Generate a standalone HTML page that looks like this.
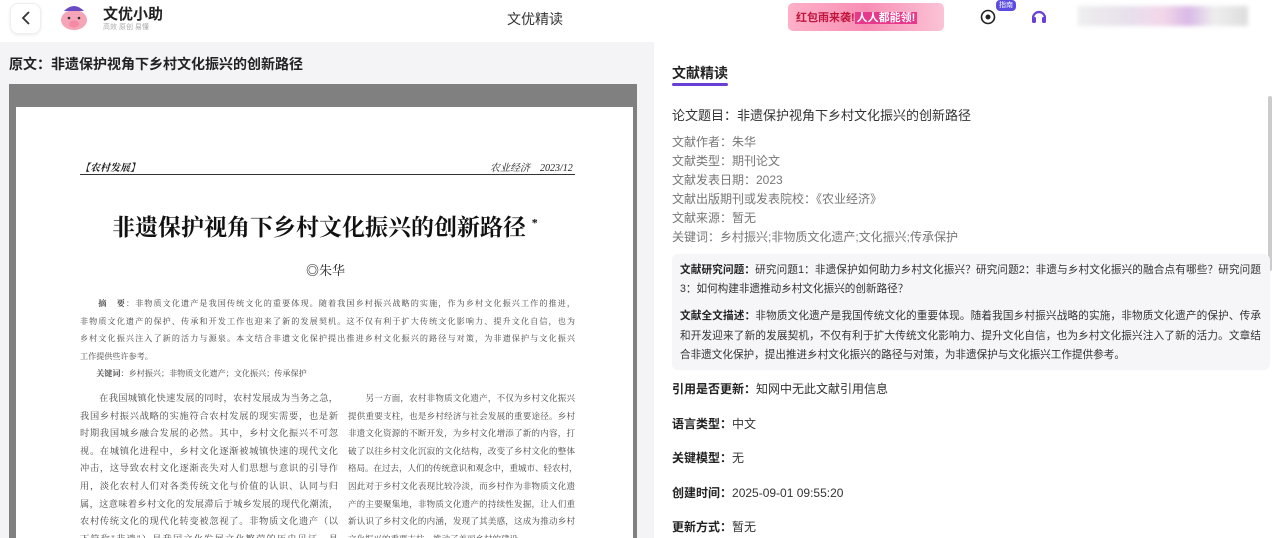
<!DOCTYPE html>
<html style="height:538px;overflow:hidden"><head><meta charset="utf-8"><style>
*{margin:0;padding:0;box-sizing:border-box}
body{width:1280px;height:538px;overflow:hidden;background:#fff;font-family:"Liberation Sans","Noto Sans CJK SC",sans-serif;color:#222;position:relative}
.a{position:absolute;white-space:nowrap}
.serif{font-family:"Liberation Serif","Noto Serif CJK SC",serif}
.col{position:absolute;font-family:"Liberation Serif","Noto Serif CJK SC",serif;font-size:9.2px;line-height:17.6px;color:#444;overflow:hidden}
.col div,.jl div{text-align:justify;text-align-last:justify;white-space:nowrap}
.col div.e,.jl div.e{text-align-last:left}
.m{font-size:12px;color:#777}
.f{font-size:12px;color:#333}
.f b{color:#222}
</style></head><body>
<div class="a" style="left:10px;top:3px;width:31px;height:31px;border:1px solid #eee;border-radius:8px;box-shadow:0 1px 3px rgba(0,0,0,.08)"></div>
<svg class="a" style="left:19px;top:10px" width="14" height="16"><path d="M10 2 L4 8 L10 14" stroke="#333" stroke-width="1.8" fill="none"/></svg>
<svg class="a" style="left:52px;top:3px" width="46" height="28"><ellipse cx="22" cy="17" rx="13" ry="10" fill="#f6a5b8"/><path d="M12 8 Q22 -2 32 8 Z" fill="#6a4bc4"/><ellipse cx="22" cy="21" rx="5" ry="3.5" fill="#f48aa3"/><circle cx="17" cy="15" r="1.3" fill="#333"/><circle cx="27" cy="15" r="1.3" fill="#333"/></svg>
<div class="a" style="left:103px;top:3px;font-size:15px;font-weight:bold;color:#222">文优小助</div>
<div class="a" style="left:103px;top:22px;font-size:7px;color:#aaa">高效 原创 易懂</div>
<div class="a" style="left:507px;top:9px;font-size:14px;color:#333">文优精读</div>
<div class="a" style="left:788px;top:3px;width:156px;height:28px;border-radius:5px;background:linear-gradient(90deg,#ffb0c8,#f78fb4,#fbc3d6)"></div>
<div class="a" style="left:796px;top:9px;font-size:11px;font-weight:bold;color:#c0143c">红包雨来袭!<span style="background:#e8388b;color:#fff;padding:0 2px">人人都能领!</span></div>
<svg class="a" style="left:980px;top:9px" width="16" height="16"><circle cx="8" cy="8" r="6.5" stroke="#222" stroke-width="1.6" fill="none"/><circle cx="8" cy="8" r="2.5" fill="#222"/></svg>
<div class="a" style="left:996px;top:0;width:20px;height:11px;background:#5b4de0;border-radius:4px;color:#fff;font-size:7px;text-align:center;line-height:11px">指南</div>
<svg class="a" style="left:1030px;top:8px" width="18" height="18"><path d="M3 10 A6 6 0 0 1 15 10" stroke="#6a3fd6" stroke-width="2.2" fill="none"/><rect x="2" y="9" width="4" height="6" rx="1.5" fill="#6a3fd6"/><rect x="12" y="9" width="4" height="6" rx="1.5" fill="#6a3fd6"/></svg>
<div class="a" style="left:1078px;top:6px;width:170px;height:20px;background:linear-gradient(90deg,#eee,#e8e0ec 30%,#f3d7ea 50%,#d9b9e6 65%,#eee 80%,#ddd);filter:blur(2px)"></div>

<div class="a" style="left:0;top:42px;width:640px;height:496px;background:#f4f4f6"></div>
<div class="a" style="left:9px;top:54px;font-size:14px;font-weight:bold;color:#222">原文：非遗保护视角下乡村文化振兴的创新路径</div>
<div class="a" style="left:9px;top:84px;width:628px;height:454px;background:#808080"></div>
<div class="a" style="left:16px;top:107px;width:617px;height:431px;background:#fff"></div>
<div class="a serif" style="left:80px;top:159px;font-size:10px;font-weight:bold;font-style:italic;color:#222">【农村发展】</div>
<div class="a serif" style="left:490px;top:159px;font-size:10px;font-style:italic;color:#222">农业经济　2023/12</div>
<div class="a" style="left:80px;top:174px;width:495px;border-top:1px solid #333"></div>
<div class="a serif" style="left:112px;top:209px;font-size:23px;font-weight:bold;color:#111">非遗保护视角下乡村文化振兴的创新路径 <sup style="font-size:12px">*</sup></div>
<div class="a serif" style="left:306px;top:260px;font-size:13px;color:#222">◎朱华</div>
<div class="col" style="left:80px;top:295px;width:495px;font-size:8.1px;line-height:17.5px">
<div>　　<b>摘　要</b>：非物质文化遗产是我国传统文化的重要体现。随着我国乡村振兴战略的实施，作为乡村文化振兴工作的推进，</div>
<div>非物质文化遗产的保护、传承和开发工作也迎来了新的发展契机。这不仅有利于扩大传统文化影响力、提升文化自信，也为</div>
<div>乡村文化振兴注入了新的活力与源泉。本文结合非遗文化保护提出推进乡村文化振兴的路径与对策，为非遗保护与文化振兴</div>
<div class="e">工作提供些许参考。</div>
<div class="e">　　<b>关键词</b>：乡村振兴；非物质文化遗产；文化振兴；传承保护</div></div>
<div class="col" style="left:80px;top:390px;width:258px;height:148px">
<div>　　在我国城镇化快速发展的同时，农村发展成为当务之急，</div>
<div>我国乡村振兴战略的实施符合农村发展的现实需要，也是新</div>
<div>时期我国城乡融合发展的必然。其中，乡村文化振兴不可忽</div>
<div>视。在城镇化进程中，乡村文化逐渐被城镇快速的现代文化</div>
<div>冲击，这导致农村文化逐渐丧失对人们思想与意识的引导作</div>
<div>用，淡化农村人们对各类传统文化与价值的认识、认同与归</div>
<div>属，这意味着乡村文化的发展滞后于城乡发展的现代化潮流，</div>
<div>农村传统文化的现代化转变被忽视了。非物质文化遗产（以</div>
<div>下简称"非遗"）是我国文化发展文化繁荣的历史见证，是</div></div>
<div class="col" style="left:348px;top:390px;width:227px;height:148px;font-size:8.5px">
<div>　　另一方面，农村非物质文化遗产，不仅为乡村文化振兴</div>
<div>提供重要支柱，也是乡村经济与社会发展的重要途径。乡村</div>
<div>非遗文化资源的不断开发，为乡村文化增添了新的内容，打</div>
<div>破了以往乡村文化沉寂的文化结构，改变了乡村文化的整体</div>
<div>格局。在过去，人们的传统意识和观念中，重城市、轻农村，</div>
<div>因此对于乡村文化表现比较冷淡，而乡村作为非物质文化遗</div>
<div>产的主要聚集地，非物质文化遗产的持续性发掘，让人们重</div>
<div>新认识了乡村文化的内涵，发现了其美感，这成为推动乡村</div>
<div class="e">文化振兴的重要支柱，推动了美丽乡村的建设。</div></div>

<div class="a" style="left:640px;top:42px;width:14px;height:496px;background:#f4f4f6"></div>
<div class="a" style="left:672px;top:63px;font-size:14px;font-weight:bold;color:#222">文献精读</div>
<div class="a" style="left:672px;top:83px;width:56px;height:3px;border-radius:2px;background:#6a3fd6"></div>
<div class="a" style="left:1268px;top:96px;width:4px;height:175px;border-radius:2px;background:#ccc"></div>
<div class="a" style="left:672px;top:105px;font-size:13px;color:#333">论文题目：非遗保护视角下乡村文化振兴的创新路径</div>
<div class="a m" style="left:672px;top:133px">文献作者：朱华</div>
<div class="a m" style="left:672px;top:152px">文献类型：期刊论文</div>
<div class="a m" style="left:672px;top:171px">文献发表日期：2023</div>
<div class="a m" style="left:672px;top:190px">文献出版期刊或发表院校：《农业经济》</div>
<div class="a m" style="left:672px;top:209px">文献来源：暂无</div>
<div class="a m" style="left:672px;top:228px">关键词：乡村振兴;非物质文化遗产;文化振兴;传承保护</div>
<div class="a" style="left:672px;top:254px;width:598px;height:116px;background:#f6f6f8;border-radius:6px"></div>
<div class="a f jl" style="left:680px;top:261px;width:581px;line-height:19px;font-size:10.6px">
<div><b>文献研究问题：</b>研究问题1：非遗保护如何助力乡村文化振兴？研究问题2：非遗与乡村文化振兴的融合点有哪些？研究问题</div>
<div class="e">3：如何构建非遗推动乡村文化振兴的创新路径？</div></div>
<div class="a f jl" style="left:680px;top:307px;width:581px;line-height:19.5px;font-size:10.6px">
<div><b>文献全文描述：</b>非物质文化遗产是我国传统文化的重要体现。随着我国乡村振兴战略的实施，非物质文化遗产的保护、传承</div>
<div>和开发迎来了新的发展契机，不仅有利于扩大传统文化影响力、提升文化自信，也为乡村文化振兴注入了新的活力。文章结</div>
<div class="e">合非遗文化保护，提出推进乡村文化振兴的路径与对策，为非遗保护与文化振兴工作提供参考。</div></div>
<div class="a f" style="left:672px;top:380px"><b>引用是否更新：</b>知网中无此文献引用信息</div>
<div class="a f" style="left:672px;top:415px"><b>语言类型：</b>中文</div>
<div class="a f" style="left:672px;top:449px"><b>关键模型：</b>无</div>
<div class="a f" style="left:672px;top:484px"><b>创建时间：</b>2025-09-01 09:55:20</div>
<div class="a f" style="left:672px;top:518px"><b>更新方式：</b>暂无</div>
</body></html>
